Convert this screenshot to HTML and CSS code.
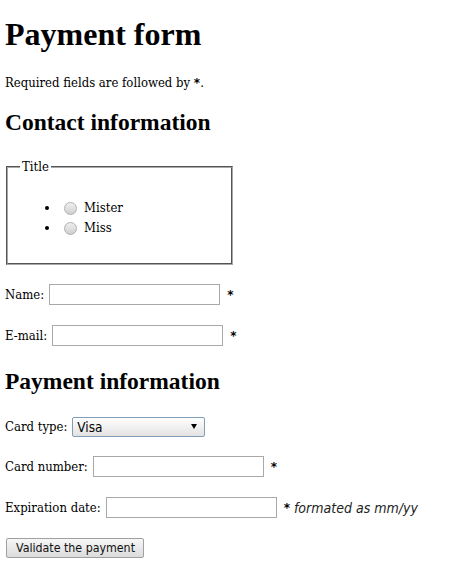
FILE: index.html
```html
<!DOCTYPE html>
<html>
<head>
<meta charset="utf-8">
<link rel="stylesheet" href="styles.css">
</head>
<body class="page">
<form class="form">
  <h1 class="title">Payment form</h1>
  <p class="note">Required fields are followed by <strong><abbr class="req" title="required">*</abbr></strong>.</p>
  <section class="section">
    <h2 class="section-title">Contact information</h2>
    <fieldset class="box">
      <legend class="legend">Title</legend>
      <ul class="list">
        <li class="item"><label class="radio-label"><input type="radio" class="radio" name="title" value="mr"><span>Mister</span></label></li>
        <li class="item"><label class="radio-label"><input type="radio" class="radio" name="title" value="ms"><span>Miss</span></label></li>
      </ul>
    </fieldset>
    <p class="row row-first"><label class="label">Name:</label><input type="text" class="field" name="username"><strong class="star"><abbr class="req" title="required">*</abbr></strong></p>
    <p class="row"><label class="label">E-mail:</label><input type="email" class="field" name="usermail"><strong class="star"><abbr class="req" title="required">*</abbr></strong></p>
  </section>
  <section class="section">
    <h2 class="section-title section-title-2">Payment information</h2>
    <p class="row row-select"><label class="label">Card type:</label><span class="select-wrap"><select class="select" name="usercard"><option>Visa</option><option>Mastercard</option><option>American Express</option></select></span></p>
    <p class="row row-tight"><label class="label">Card number:</label><input type="text" class="field" name="cardnumber"><strong class="star"><abbr class="req" title="required">*</abbr></strong></p>
    <p class="row"><label class="label">Expiration date:</label><input type="text" class="field" name="expiration"><strong class="star"><abbr class="req" title="required">*</abbr></strong><em class="hint">formated as mm/yy</em></p>
  </section>
  <p class="row row-btn"><button type="submit" class="btn">Validate the payment</button></p>
</form>
</body>
</html>
```
FILE: styles.css
```css
.page {
  margin: 0 5px;
  font-family: "DejaVu Serif Condensed", "DejaVu Serif", serif;
  font-stretch: condensed;
  font-size: 13px;
  line-height: 16px;
  color: #000;
  background: #fff;
}
.form { margin: 0; }
.title {
  font-family: "Liberation Serif", serif;
  font-stretch: normal;
  font-size: 32px;
  line-height: 37px;
  font-weight: bold;
  margin: 16px 0 22px;
}
.note { margin: 0; }
.section-title {
  font-family: "Liberation Serif", serif;
  font-stretch: normal;
  font-size: 23.5px;
  line-height: 28px;
  font-weight: bold;
  margin: 17px 0 23px;
}
.section-title-2 { margin: 21px 0 22px; }
.req {
  text-decoration: none;
  border: none;
  color: #000;
  font-family: "DejaVu Sans", sans-serif;
  font-stretch: normal;
  font-size: 12px;
  font-weight: bold;
}
.box {
  box-sizing: border-box;
  width: 227px;
  margin: 0 0 0 1px;
  padding: 0 12px;
  border: 2px groove #a8a8a8;
  min-width: 0;
}
.legend { padding: 0 2px; line-height: 16px; }
.list { margin: 23px 0 25px; padding-left: 40px; }
.item { height: 20px; line-height: 20px; padding-left: 4px; }
.radio-label { display: inline-flex; align-items: center; gap: 7px; height: 20px; vertical-align: top; }
.radio {
  appearance: none;
  -webkit-appearance: none;
  width: 13px;
  height: 13px;
  margin: 0;
  border: 1px solid #b0b0b0;
  border-radius: 50%;
  background: linear-gradient(to bottom, #f0f0f0, #cfcfcf);
  box-sizing: border-box;
}
.row {
  display: flex;
  align-items: center;
  gap: 5px;
  height: 21px;
  margin: 20px 0 0;
}
.row-first { margin-top: 19px; }
.row-select { height: 20px; margin-top: 0; }
.row-tight { margin-top: 19px; }
.row-btn { height: 20px; margin-top: 20px; margin-left: 1px; }
.label { white-space: nowrap; }
.field {
  box-sizing: border-box;
  width: 171px;
  height: 21px;
  margin: 0;
  padding: 1px 3px;
  border: 1px solid #a9a9a9;
  background: #fff;
  font-size: 13px;
}
.star { margin-left: 2px; font-weight: bold; color: #000; }
.select-wrap { position: relative; display: inline-block; height: 20px; }
.select-wrap::after {
  content: "";
  position: absolute;
  right: 8px;
  top: 7px;
  border-left: 3.5px solid transparent;
  border-right: 3.5px solid transparent;
  border-top: 5px solid #000;
  pointer-events: none;
}
.select {
  appearance: none;
  -webkit-appearance: none;
  box-sizing: border-box;
  width: 133px;
  height: 20px;
  margin: 0;
  padding: 0 4px;
  border: 1px solid #7f9db9;
  border-radius: 2px;
  background: linear-gradient(to bottom, #ffffff, #e2e2e2);
  font-family: "DejaVu Sans Condensed", "DejaVu Sans", sans-serif;
  font-stretch: condensed;
  font-size: 13.5px;
  color: #000;
}
.hint {
  font-family: "DejaVu Sans Condensed", "DejaVu Sans", sans-serif;
  font-stretch: condensed;
  font-style: italic;
  font-size: 14px;
  color: #222;
  margin-left: -1px;
  white-space: nowrap;
}
.btn {
  box-sizing: border-box;
  width: 138px;
  height: 20px;
  margin: 0;
  padding: 0 0 0 1px;
  border: 1px solid #a0a0a0;
  border-radius: 2px;
  background: linear-gradient(to bottom, #f7f7f7, #dcdcdc);
  font-family: "DejaVu Sans Condensed", "DejaVu Sans", sans-serif;
  font-stretch: condensed;
  font-size: 12.3px;
  color: #111;
}
```
